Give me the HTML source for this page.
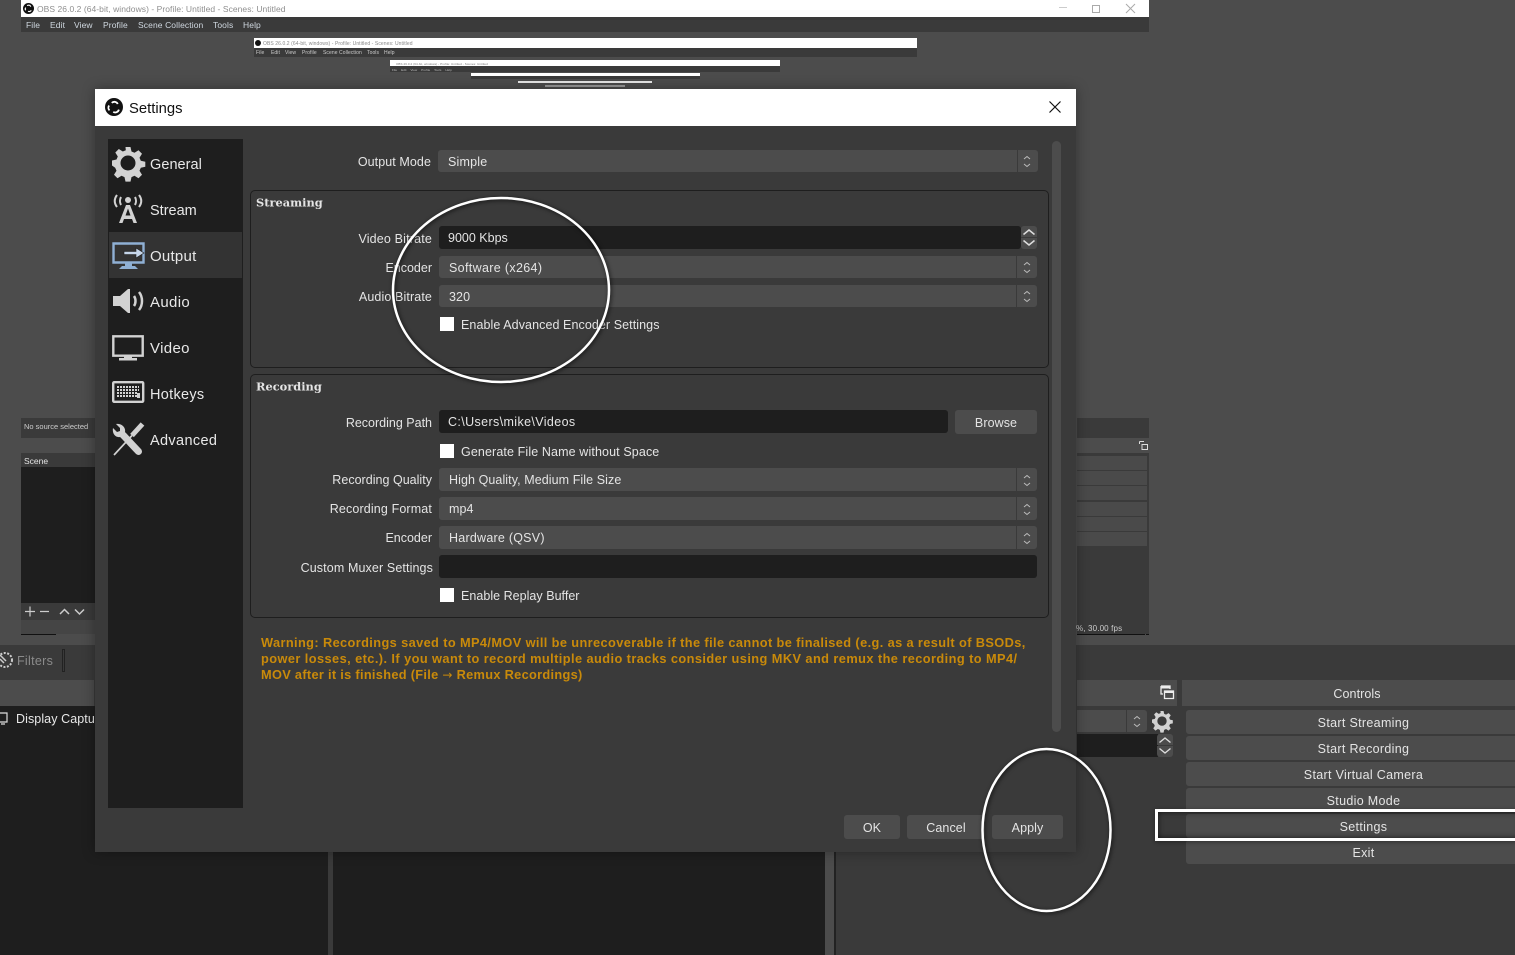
<!DOCTYPE html>
<html><head><meta charset="utf-8"><title>OBS Settings</title>
<style>
html,body{margin:0;padding:0;width:1515px;height:955px;overflow:hidden;background:#4c4c4c}
body{position:relative;font-family:"Liberation Sans",sans-serif;font-size:12.5px;color:#e4e4e4;letter-spacing:.08px}
.b{position:absolute}
.t{position:absolute;white-space:nowrap;line-height:16px;height:16px;transform:translateY(1px)}
.r{text-align:right;width:200px}
.c{text-align:center}
.combo{position:absolute;background:#4c4c4c;border-radius:3px}
.combo:after{content:"";position:absolute;right:20px;top:0;bottom:0;width:1px;background:#3a3a3a}
.inp{position:absolute;background:#1e1e1e;border-radius:3px}
.btn{position:absolute;background:#4c4c4c;border-radius:3px;text-align:center;color:#e4e4e4;line-height:27px!important}
.ctl{letter-spacing:.32px}
.ck{position:absolute;left:440px;width:14px;height:14px;background:#fff}
.grp{position:absolute;left:250px;width:797px;border:1px solid #1e1e1e;border-radius:5px}
.gt{position:absolute;left:256px;font-weight:bold;color:#e4e4e4;font-size:11.4px;line-height:16px;font-family:"DejaVu Serif",serif;transform:translateY(.5px);letter-spacing:0}
.nav{position:absolute;left:150px;font-size:15px;line-height:18px;color:#e8e8e8;transform:translateY(1px);letter-spacing:0}
svg{position:absolute;overflow:visible}
.w{position:absolute;left:261px;color:#c98a0a;font-weight:bold;font-size:12.8px;line-height:16px;white-space:nowrap;transform:translateY(1px)}
.sm{filter:blur(.3px)}
.m{position:absolute;top:17px;font-size:8.5px;line-height:16px;color:#d0d8e0;filter:blur(.2px);letter-spacing:.1px;white-space:nowrap}
.m2{position:absolute;top:45px;font-size:5px;line-height:16px;color:#ccc;filter:blur(.3px);white-space:nowrap}
</style></head><body>

<!-- main bottom background -->
<div class="b" style="left:0;top:645px;width:1515px;height:310px;background:#3a3a3a"></div>
<div class="b" style="left:0;top:680px;width:94px;height:26px;background:#4c4c4c"></div>
<div class="b" style="left:0;top:706px;width:328px;height:249px;background:#1e1e1e"></div>
<div class="b" style="left:333px;top:840px;width:492px;height:115px;background:#1e1e1e"></div>
<div class="b" style="left:825px;top:840px;width:9px;height:115px;background:#4c4c4c"></div>
<div class="b" style="left:834px;top:840px;width:2px;height:115px;background:#222"></div>
<div class="t" style="left:17px;top:652px;color:#8b8b8b;letter-spacing:.3px">Filters</div>
<div class="b" style="left:62px;top:649px;width:1px;height:21px;border:1px solid #222"></div>
<svg style="left:0;top:652px" width="14" height="16"><circle cx="5" cy="8" r="7" fill="none" stroke="#ccc" stroke-width="2" stroke-dasharray="2 1.5"/><path d="M0 3L6 9M0 7L4 11" stroke="#ccc" stroke-width="1.5"/></svg>
<svg style="left:0;top:712px" width="10" height="14"><path d="M-3 1H7V10H-3M1 12H5" fill="none" stroke="#ddd" stroke-width="1.2"/></svg>
<div class="t" style="left:16px;top:710px;width:78px;overflow:hidden;color:#e8e8e8">Display Capture</div>

<!-- nested OBS window top -->
<div class="b" style="left:21px;top:0;width:1128px;height:17px;background:#fff"></div>
<div class="b" style="left:21px;top:17px;width:1128px;height:15px;background:#3a3a3a"></div>
<svg style="left:23px;top:3px" width="11" height="11" viewBox="0 0 24 24"><circle cx="12" cy="12" r="12" fill="#111"/><path d="M9 6a5 5 0 0 1 8 2M6 16a5 5 0 0 1 0-6M18 16a5 5 0 0 1-7 2" fill="none" stroke="#fff" stroke-width="2.500"/></svg>
<div class="t sm" style="left:37px;top:0;font-size:8.5px;color:#8f8f8f;letter-spacing:.05px">OBS 26.0.2 (64-bit, windows) - Profile: Untitled - Scenes: Untitled</div>
<div class="m" style="left:26px">File</div><div class="m" style="left:50px">Edit</div><div class="m" style="left:74px">View</div><div class="m" style="left:103px">Profile</div><div class="m" style="left:138px">Scene Collection</div><div class="m" style="left:213px">Tools</div><div class="m" style="left:243px">Help</div>
<div class="b" style="left:1059px;top:7px;width:8px;height:1px;background:#ccc"></div>
<div class="b" style="left:1092px;top:5px;width:6px;height:6px;border:1px solid #aaa"></div>
<svg style="left:1126px;top:4px" width="9" height="9"><path d="M0 0L9 9M9 0L0 9" stroke="#aaa"/></svg>

<!-- recursive windows -->
<div class="b" style="left:254px;top:38px;width:663px;height:10px;background:#fff"></div>
<div class="b" style="left:254px;top:48px;width:663px;height:9px;background:#3a3a3a"></div>
<div class="t sm" style="left:263px;top:35px;font-size:5px;color:#888">OBS 26.0.2 (64-bit, windows) - Profile: Untitled - Scenes: Untitled</div>
<div class="m2" style="left:256px">File</div><div class="m2" style="left:271px">Edit</div><div class="m2" style="left:285px">View</div><div class="m2" style="left:302px">Profile</div><div class="m2" style="left:323px">Scene Collection</div><div class="m2" style="left:367px">Tools</div><div class="m2" style="left:384px">Help</div>
<svg style="left:255px;top:40px" width="6" height="6"><circle cx="3" cy="3" r="3" fill="#111"/></svg>
<div class="b" style="left:390px;top:60px;width:390px;height:6px;background:#fff"></div>
<div class="b" style="left:390px;top:66px;width:390px;height:6px;background:#3a3a3a"></div>
<div class="t sm" style="left:396px;top:55px;font-size:3px;color:#777">OBS 26.0.2 (64-bit, windows) - Profile: Untitled - Scenes: Untitled</div>
<div class="t sm" style="left:392px;top:61px;font-size:3px;color:#bbb;word-spacing:3px">File Edit View Profile Tools Help</div>
<div class="b" style="left:471px;top:73px;width:229px;height:3px;background:#fff"></div>
<div class="b" style="left:471px;top:76px;width:229px;height:3px;background:#3a3a3a"></div>
<div class="b" style="left:518px;top:81px;width:134px;height:2px;background:#e8e8e8"></div>
<div class="b" style="left:545px;top:85px;width:80px;height:2px;background:#999"></div>

<!-- nested left panel -->
<div class="b" style="left:21px;top:418px;width:74px;height:20px;background:#3a3a3a"></div>
<div class="t sm" style="left:24px;top:418px;font-size:7.5px;color:#ccc;letter-spacing:0">No source selected</div>
<div class="b" style="left:21px;top:453px;width:74px;height:14px;background:#3a3a3a"></div>
<div class="t" style="left:24px;top:452px;font-size:8.500px;color:#e4e4e4;letter-spacing:0">Scene</div>
<div class="b" style="left:21px;top:467px;width:74px;height:136px;background:#1e1e1e"></div>
<div class="b" style="left:21px;top:603px;width:74px;height:17px;background:#3a3a3a"></div>
<svg style="left:23px;top:604px" width="70" height="15"><path d="M2 7.500H12M7 2.500V12.500M17 7.500H26" stroke="#ccc" stroke-width="1.200" fill="none"/><path d="M37 10L41.500 5.500L46 10M52 5.500L56.500 10L61 5.500" stroke="#ccc" stroke-width="1.500" fill="none"/></svg>
<div class="b" style="left:21px;top:620px;width:74px;height:14px;background:#454545"></div>
<div class="b" style="left:21px;top:634px;width:35px;height:1px;background:#111"></div>

<!-- nested right panel -->
<div class="b" style="left:1077px;top:418px;width:72px;height:20px;background:#3a3a3a"></div>
<div class="b" style="left:1077px;top:453px;width:72px;height:181px;background:#3a3a3a"></div>
<div class="b" style="left:1077px;top:456px;width:70px;height:14px;background:#4a4a4a"></div>
<div class="b" style="left:1077px;top:471px;width:70px;height:14px;background:#4a4a4a"></div>
<div class="b" style="left:1077px;top:486px;width:70px;height:14px;background:#4a4a4a"></div>
<div class="b" style="left:1077px;top:502px;width:70px;height:14px;background:#4a4a4a"></div>
<div class="b" style="left:1077px;top:517px;width:70px;height:14px;background:#4a4a4a"></div>
<div class="b" style="left:1077px;top:532px;width:70px;height:14px;background:#4a4a4a"></div>
<svg style="left:1139px;top:441px" width="9" height="9"><path d="M.5 .5H5M.5 .5V3M3 3.500H8.500V8.500H3Z" fill="none" stroke="#ddd"/></svg>
<div class="t" style="left:1076px;top:620px;font-size:8px;color:#ccc;letter-spacing:.15px">%, 30.00 fps</div>
<div class="b" style="left:1077px;top:634px;width:68px;height:1px;background:#111"></div>
<div class="b" style="left:1146px;top:634px;width:3px;height:1px;background:#111"></div>

<!-- controls right -->
<div class="b" style="left:1077px;top:680px;width:100px;height:26px;background:#4c4c4c"></div>
<svg style="left:1160px;top:685px" width="15" height="15"><path d="M1 1H10V4M1 1V9H3" fill="none" stroke="#eee" stroke-width="1.300"/><path d="M1 1H10V3.500H1Z" fill="#eee"/><path d="M4.500 6H13.500V13.500H4.500Z" fill="none" stroke="#eee" stroke-width="1.300"/><path d="M4.500 6H13.500V8H4.500Z" fill="#eee"/></svg>
<div class="b" style="left:1077px;top:710px;width:70px;height:22px;background:#4c4c4c;border-radius:0 3px 3px 0"></div>
<div class="b" style="left:1126px;top:710px;width:1px;height:22px;background:#3a3a3a"></div>
<svg style="left:1132px;top:715px" width="10" height="13"><path d="M2 4L5 1.500L8 4M2 9L5 11.500L8 9" fill="none" stroke="#bbb"/></svg>
<svg style="left:1152px;top:711px" width="20" height="20" viewBox="0 0 32 32"><use href="#gear"/></svg>
<div class="b" style="left:1077px;top:734px;width:81px;height:23px;background:#1e1e1e"></div>
<div class="b" style="left:1157px;top:734px;width:16px;height:11px;background:#4c4c4c;border-radius:3px 3px 0 0"></div>
<div class="b" style="left:1157px;top:746px;width:16px;height:11px;background:#4c4c4c;border-radius:0 0 3px 3px"></div>
<svg style="left:1157px;top:734px" width="16" height="23"><path d="M2.500 8.500L8 4L13.500 8.500M2.500 14.500L8 19L13.500 14.500" fill="none" stroke="#ddd" stroke-width="1.400"/></svg>
<div class="b" style="left:1182px;top:680px;width:333px;height:26px;background:#4c4c4c"></div>
<div class="t c" style="left:1182px;top:685px;width:350px;color:#e4e4e4">Controls</div>
<div class="btn ctl" style="left:1186px;top:710px;width:355px;height:24px">Start Streaming</div>
<div class="btn ctl" style="left:1186px;top:736px;width:355px;height:24px">Start Recording</div>
<div class="btn ctl" style="left:1186px;top:762px;width:355px;height:24px">Start Virtual Camera</div>
<div class="btn ctl" style="left:1186px;top:788px;width:355px;height:24px">Studio Mode</div>
<div class="btn ctl" style="left:1186px;top:814px;width:355px;height:24px">Settings</div>
<div class="btn ctl" style="left:1186px;top:840px;width:355px;height:24px">Exit</div>
<div class="b" style="left:1155px;top:809px;width:362px;height:26px;border:3px solid #fff;box-shadow:inset 0 0 6px rgba(0,0,0,.7),0 1px 4px rgba(0,0,0,.4)"></div>

<!-- modal -->
<div class="b" style="left:95px;top:89px;width:981px;height:763px;background:#3a3a3a;box-shadow:0 0 12px rgba(0,0,0,.35)"></div>
<div class="b" style="left:95px;top:89px;width:981px;height:37px;background:#fff"></div>
<svg style="left:105px;top:98px" width="18" height="18" viewBox="0 0 24 24"><defs><g id="gear"><path fill="#d2d2d2" fill-rule="evenodd" d="M13.500 0h5l1 4.500 3 1.300 4-2.500 3.500 3.500-2.500 4 1.300 3 4.500 1v5l-4.500 1-1.300 3 2.500 4-3.500 3.500-4-2.500-3 1.300-1 4.500h-5l-1-4.500-3-1.300-4 2.500-3.500-3.500 2.500-4-1.300-3L0 18.500v-5l4.500-1 1.300-3-2.500-4 3.500-3.500 4 2.500 3-1.300zM16 8.500a7.500 7.500 0 1 0 0 15 7.500 7.500 0 0 0 0-15z"/></g></defs><circle cx="12" cy="12" r="12" fill="#111"/><path d="M9 6.500a5 5 0 0 1 8 1.500M6 16.500a5 5 0 0 1-.5-6.500M18.500 15.500a5 5 0 0 1-7.500 3" fill="none" stroke="#fff" stroke-width="2.400"/></svg>
<div class="t" style="left:129px;top:99px;font-size:14.800px;line-height:18px;height:18px;color:#111;letter-spacing:0">Settings</div>
<svg style="left:1049px;top:101px" width="12" height="12"><path d="M.5 .5L11.500 11.500M11.500 .5L.5 11.500" stroke="#111" stroke-width="1.200"/></svg>

<!-- sidebar -->
<div class="b" style="left:108px;top:139px;width:135px;height:669px;background:#1e1e1e"></div>
<div class="b" style="left:109px;top:232px;width:133px;height:46px;background:#333"></div>

<svg style="left:112px;top:147px" width="32" height="32" viewBox="0 0 32 32"><use href="#gear"/></svg>
<div class="nav" style="top:155px;font-size:14.500px;letter-spacing:.05px">General</div>
<svg style="left:111px;top:193px" width="34" height="32" viewBox="0 0 34 32"><g fill="none" stroke="#d2d2d2" stroke-width="2"><path d="M6 2C3 6 3 10 6 14M10 4C8.500 7 8.500 9 10 12M28 2C31 6 31 10 28 14M24 4C25.500 7 25.500 9 24 12"/></g><circle cx="17" cy="7" r="3" fill="#d2d2d2"/><path d="M8 30L15 12H19L26 30H22.500L21 26H13L11.500 30ZM14.500 22.500H19.500L17 15.500Z" fill="#d2d2d2" fill-rule="evenodd"/></svg>
<div class="nav" style="top:201px;font-size:14.500px">Stream</div>
<svg style="left:112px;top:242px" width="33" height="28" viewBox="0 0 33 28"><path d="M1.500 1.500H31.500V20.500H1.500Z" fill="none" stroke="#8fb0d4" stroke-width="2.400"/><path d="M10 24H23L26 27H7Z" fill="#8fb0d4"/><path d="M13 21H20V24H13Z" fill="#8fb0d4"/><path d="M12 9.500H24V6L32 11L24 16V12.500H12Z" fill="#c6d6ea" stroke="#1e1e1e" stroke-width=".6"/></svg>
<div class="nav" style="top:247px;letter-spacing:.25px">Output</div>
<svg style="left:113px;top:289px" width="32" height="25" viewBox="0 0 32 25"><path d="M0 7H7L15 0H17V24H15L7 17H0Z" fill="#d2d2d2"/><path d="M21 7C23 10 23 14 21 17M26 3C30 8 30 16 26 21" fill="none" stroke="#d2d2d2" stroke-width="2.500"/></svg>
<div class="nav" style="top:293px;letter-spacing:.35px">Audio</div>
<svg style="left:112px;top:335px" width="33" height="26" viewBox="0 0 33 26"><path d="M1.300 1.300H30.700V20.700H1.300Z" fill="none" stroke="#d2d2d2" stroke-width="2.400"/><path d="M12 21H20V23H25V25.500H7V23H12Z" fill="#d2d2d2"/></svg>
<div class="nav" style="top:339px;letter-spacing:.35px">Video</div>
<svg style="left:112px;top:381px" width="33" height="23" viewBox="0 0 33 23"><rect x="1.200" y="1.200" width="30" height="19.600" fill="none" stroke="#d2d2d2" stroke-width="2.400" rx="1"/><path d="M5 6H27M5 9H27M5 12H25M5 15H25" stroke="#d2d2d2" stroke-width="2" stroke-dasharray="2 1" fill="none"/><path d="M25 12H28V17H25Z" fill="#d2d2d2"/></svg>
<div class="nav" style="top:385px;font-size:14.500px;letter-spacing:.3px">Hotkeys</div>
<svg style="left:112px;top:423px" width="32" height="33" viewBox="0 0 32 33"><path d="M12 13L26.500 28.500" stroke="#d2d2d2" stroke-width="7" stroke-linecap="round" fill="none"/><path d="M30.500 1L20 12.500" stroke="#d2d2d2" stroke-width="5" fill="none"/><path d="M20 12.500L2 32" stroke="#d2d2d2" stroke-width="1.700" fill="none"/><path d="M1 5L5 9L8 8L8 5L4 1C9 0 14 4 13 9L18 15L14 19L8 14C3 15 0 10 1 5Z" fill="#d2d2d2"/></svg>
<div class="nav" style="top:431px;font-size:14.500px;letter-spacing:.35px">Advanced</div>

<!-- output mode -->
<div class="t r" style="left:231px;top:153px">Output Mode</div>
<div class="combo" style="left:438px;top:150px;width:600px;height:22px"></div>
<div class="t" style="left:448px;top:153px;letter-spacing:.2px">Simple</div>
<svg style="left:1022px;top:154px" width="10" height="14"><path d="M2 5L5 2.500L8 5M2 10L5 12.500L8 10" fill="none" stroke="#bbb"/></svg>

<!-- streaming -->
<div class="grp" style="top:190px;height:176px"></div>
<div class="gt" style="top:194px">Streaming</div>
<div class="t r" style="left:232px;top:230px;letter-spacing:.17px">Video Bitrate</div>
<div class="inp" style="left:439px;top:226px;width:582px;height:23px"></div>
<div class="t" style="left:448px;top:229px;letter-spacing:0">9000 Kbps</div>
<div class="b" style="left:1021px;top:226px;width:16px;height:11px;background:#4c4c4c;border-radius:3px 3px 0 0"></div>
<div class="b" style="left:1021px;top:238px;width:16px;height:11px;background:#4c4c4c;border-radius:0 0 3px 3px"></div>
<svg style="left:1021px;top:226px" width="16" height="23"><path d="M2.500 8.500L8 4L13.500 8.500M2.500 14.500L8 19L13.500 14.500" fill="none" stroke="#ddd" stroke-width="1.500"/></svg>

<div class="t r" style="left:232px;top:259px;letter-spacing:0">Encoder</div>
<div class="combo" style="left:439px;top:256px;width:598px;height:22px"></div>
<div class="t" style="left:449px;top:259px;letter-spacing:.34px">Software (x264)</div>
<svg style="left:1022px;top:260px" width="10" height="14"><path d="M2 5L5 2.500L8 5M2 10L5 12.500L8 10" fill="none" stroke="#bbb"/></svg>

<div class="t r" style="left:232px;top:288px;letter-spacing:.12px">Audio Bitrate</div>
<div class="combo" style="left:439px;top:285px;width:598px;height:22px"></div>
<div class="t" style="left:449px;top:288px">320</div>
<svg style="left:1022px;top:289px" width="10" height="14"><path d="M2 5L5 2.500L8 5M2 10L5 12.500L8 10" fill="none" stroke="#bbb"/></svg>

<div class="ck" style="top:317px"></div>
<div class="t" style="left:461px;top:316px;letter-spacing:.08px">Enable Advanced Encoder Settings</div>

<!-- recording -->
<div class="grp" style="top:374px;height:242px"></div>
<div class="gt" style="top:378px">Recording</div>
<div class="t r" style="left:232px;top:414px;letter-spacing:0">Recording Path</div>
<div class="inp" style="left:439px;top:410px;width:509px;height:23px"></div>
<div class="t" style="left:448px;top:413px;letter-spacing:.38px">C:\Users\mike\Videos</div>
<div class="btn" style="left:955px;top:410px;width:82px;height:24px">Browse</div>
<div class="ck" style="top:444px"></div>
<div class="t" style="left:461px;top:443px;letter-spacing:.12px">Generate File Name without Space</div>

<div class="t r" style="left:232px;top:471px;letter-spacing:.02px">Recording Quality</div>
<div class="combo" style="left:439px;top:468px;width:598px;height:23px"></div>
<div class="t" style="left:449px;top:471px;letter-spacing:.08px">High Quality, Medium File Size</div>
<svg style="left:1022px;top:473px" width="10" height="14"><path d="M2 5L5 2.500L8 5M2 10L5 12.500L8 10" fill="none" stroke="#bbb"/></svg>

<div class="t r" style="left:232px;top:500px;letter-spacing:.14px">Recording Format</div>
<div class="combo" style="left:439px;top:497px;width:598px;height:23px"></div>
<div class="t" style="left:449px;top:500px">mp4</div>
<svg style="left:1022px;top:502px" width="10" height="14"><path d="M2 5L5 2.500L8 5M2 10L5 12.500L8 10" fill="none" stroke="#bbb"/></svg>

<div class="t r" style="left:232px;top:529px;letter-spacing:0">Encoder</div>
<div class="combo" style="left:439px;top:526px;width:598px;height:23px"></div>
<div class="t" style="left:449px;top:529px;letter-spacing:.24px">Hardware (QSV)</div>
<svg style="left:1022px;top:531px" width="10" height="14"><path d="M2 5L5 2.500L8 5M2 10L5 12.500L8 10" fill="none" stroke="#bbb"/></svg>

<div class="t r" style="left:233px;top:559px;letter-spacing:.12px">Custom Muxer Settings</div>
<div class="inp" style="left:439px;top:555px;width:598px;height:23px"></div>
<div class="ck" style="top:588px"></div>
<div class="t" style="left:461px;top:587px;letter-spacing:.03px">Enable Replay Buffer</div>

<!-- warning -->
<div class="w" style="top:634px;letter-spacing:.38px">Warning: Recordings saved to MP4/MOV will be unrecoverable if the file cannot be finalised (e.g. as a result of BSODs,</div>
<div class="w" style="top:650px;letter-spacing:.42px">power losses, etc.). If you want to record multiple audio tracks consider using MKV and remux the recording to MP4/</div>
<div class="w" style="top:666px;letter-spacing:.3px">MOV after it is finished (File <span style="font-family:'DejaVu Sans',sans-serif;font-weight:normal;font-size:12px">→</span> Remux Recordings)</div>

<div class="b" style="left:1052px;top:141px;width:9px;height:591px;background:#4c4c4c;border-radius:5px"></div>

<div class="btn" style="left:844px;top:815px;width:56px;height:24px">OK</div>
<div class="btn" style="left:907px;top:815px;width:78px;height:24px">Cancel</div>
<div class="btn" style="left:992px;top:815px;width:71px;height:24px">Apply</div>

<!-- annotation ellipses -->
<svg style="left:0;top:0;filter:drop-shadow(1px 1px 2px rgba(0,0,0,.75))" width="1515" height="955"><ellipse cx="501" cy="290" rx="108" ry="92" fill="none" stroke="#fff" stroke-width="2.500"/><ellipse cx="1046.500" cy="830" rx="64" ry="81" fill="none" stroke="#fff" stroke-width="2.500"/></svg>
</body></html>
